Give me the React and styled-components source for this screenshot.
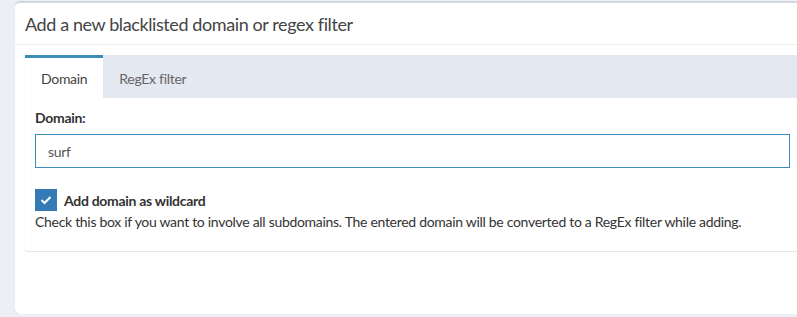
import React from "react";
import styled, { createGlobalStyle, css } from "styled-components";

const GlobalStyle = createGlobalStyle`
  html, body {
    margin: 0;
    padding: 0;
    background: #ecf0f5;
    overflow: hidden;
  }
  body {
    font-family: Lato, "Noto Sans", sans-serif;
    font-size: 14px;
    letter-spacing: -0.3px;
    color: #333;
  }
`;

const Page = styled.div`
  padding: 1px 0 0 15px;
`;

const Box = styled.div`
  width: 795px;
  min-height: 313px;
  box-sizing: border-box;
  background: #fff;
  border-top: 2px solid #d2d6de;
  border-radius: 5px;
  box-shadow: 0 1px 1px rgba(0, 0, 0, 0.12);
`;

const BoxHeader = styled.div`
  height: 41px;
  display: flex;
  align-items: center;
  padding: 0 10px;
  border-bottom: 1px solid #f0f0f0;
`;

const BoxTitle = styled.h3`
  margin: 0;
  font-size: 18px;
  font-weight: 400;
  letter-spacing: -0.4px;
  color: #444;
`;

const BoxBody = styled.div`
  padding: 10px;
`;

const TabsCard = styled.div`
  background: #fff;
  border-radius: 3px;
  box-shadow: 0 1px 1px rgba(0, 0, 0, 0.12);
`;

const TabBar = styled.ul`
  display: flex;
  margin: 0;
  padding: 0;
  list-style: none;
  background: #e4e8f0;
  height: 43px;
`;

const Tab = styled.li`
  display: flex;
  align-items: center;
  padding: 0 16px;
  box-sizing: border-box;
  border-top: 3px solid transparent;
  color: #666;
  cursor: pointer;
  ${({ active }) =>
    active &&
    css`
      background: #fff;
      border-top-color: #3c8dbc;
      color: #444;
    `}
`;

const TabContent = styled.div`
  padding: 10px;
`;

const FieldLabel = styled.label`
  display: block;
  font-weight: 700;
  color: #333;
  line-height: 20px;
  margin-bottom: 6px;
`;

const TextInput = styled.input`
  display: block;
  width: 100%;
  height: 34px;
  box-sizing: border-box;
  padding: 0 12px;
  border: 1px solid #3c8dbc;
  font-family: inherit;
  font-size: 14px;
  letter-spacing: inherit;
  color: #555;
  outline: none;
`;

const CheckRow = styled.div`
  display: flex;
  align-items: center;
  gap: 7px;
  margin-top: 21px;
`;

const CheckBox = styled.span`
  width: 22px;
  height: 22px;
  background: #337ab7;
  display: flex;
  align-items: center;
  justify-content: center;
`;

const CheckLabel = styled.span`
  font-weight: 700;
  color: #333;
`;

const HelpText = styled.p`
  margin: 1px 0 9px;
  line-height: 20px;
  color: #333;
`;

export default function App() {
  return (
    <>
      <GlobalStyle />
      <Page>
        <Box>
          <BoxHeader>
            <BoxTitle>Add a new blacklisted domain or regex filter</BoxTitle>
          </BoxHeader>
          <BoxBody>
            <TabsCard>
              <TabBar>
                <Tab active>Domain</Tab>
                <Tab>RegEx filter</Tab>
              </TabBar>
              <TabContent>
                <FieldLabel>Domain:</FieldLabel>
                <TextInput defaultValue="surf" autoFocus />
                <CheckRow>
                  <CheckBox>
                    <svg width="12" height="10" viewBox="0 0 12 10">
                      <polyline
                        points="1.5,5 4.5,8 10.5,2"
                        fill="none"
                        stroke="#fff"
                        strokeWidth="2"
                      />
                    </svg>
                  </CheckBox>
                  <CheckLabel>Add domain as wildcard</CheckLabel>
                </CheckRow>
                <HelpText>
                  Check this box if you want to involve all subdomains. The entered domain will be
                  converted to a RegEx filter while adding.
                </HelpText>
              </TabContent>
            </TabsCard>
          </BoxBody>
        </Box>
      </Page>
    </>
  );
}
